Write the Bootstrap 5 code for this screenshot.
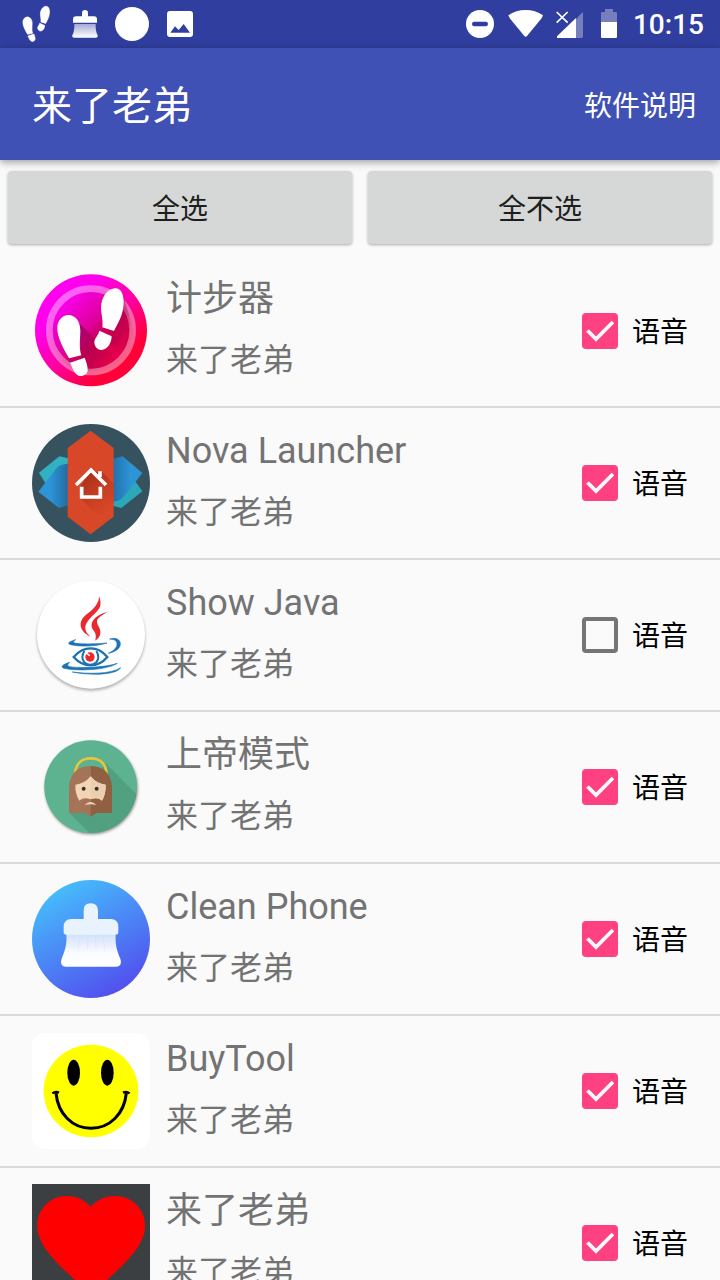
<!DOCTYPE html>
<html lang="zh-CN">
<head>
<meta charset="utf-8">
<meta name="viewport" content="width=device-width, initial-scale=1">
<title>来了老弟</title>
<link rel="stylesheet" href="https://cdn.jsdelivr.net/npm/bootstrap@5.3.0/dist/css/bootstrap.min.css">
<style>
  body { font-family: Roboto, "Noto Sans CJK SC", sans-serif; background: #fafafa; color: #000; }
  .status-bar { background: #303f9f; height: 48px; padding: 0 16px 0 12px; color: #fff; }
  .status-bar svg { height: 48px; }
  .clock { font-size: 28px; line-height: 48px; font-weight: 500; margin-left: 5px; padding-top: 2px; }
  .app-bar { background: #3f51b5; height: 112px; padding: 6px 24px 0 32px; box-shadow: 0 2px 8px rgba(0,0,0,.4); z-index: 2; }
  .app-title { font-size: 40px; line-height: 48px; font-weight: 400; color: #fff; }
  .app-link { font-size: 28px; line-height: 40px; }
  .actions { padding: 11px 8px 12px; gap: 16px; }
  .btn-pick, .btn-pick:hover { background: #d6d8d7; color: #1d1e1e; border: 0; border-radius: 4px; height: 73px; padding: 8px 12px 4px; font-size: 28px; line-height: 40px; box-shadow: 0 1px 3px rgba(0,0,0,.32); }
  .app-list { scrollbar-width: none; }
  .app-list::-webkit-scrollbar { display: none; }
  .app-row { padding: 16px 32px; gap: 16px; border-bottom: 2px solid #dadada; }
  .app-icon { width: 118px; height: 118px; }
  .app-name { font-size: 36px; line-height: 54px; font-weight: 400; color: #737373; margin-bottom: 4px; }
  .app-alias { font-size: 32px; line-height: 60px; color: #737373; }
  .voice { gap: 14px; font-size: 28px; line-height: 40px; }
  .voice label { padding-top: 4px; }
  .voice .form-check-input { width: 36px; height: 36px; margin: 0; border: 4px solid #757575; border-radius: 4px; background-color: transparent; }
  .voice .form-check-input:checked { border-color: #ff4081; background-color: #ff4081; background-origin: border-box; background-size: 36px 36px;
    background-image: url("data:image/svg+xml,%3Csvg xmlns='http://www.w3.org/2000/svg' viewBox='0 0 36 36'%3E%3Cpath d='M5.5 17.5 14 26 31 9' fill='none' stroke='%23fafafa' stroke-width='3.8'/%3E%3C/svg%3E"); }
</style>
</head>
<body class="vh-100 d-flex flex-column overflow-hidden">
<svg width="0" height="0" class="position-absolute" aria-hidden="true">
  <defs>
    <g id="feet">
      <path d="M145 165C127 165 112 182 112 204C112 232 127 260 147 295L184 286C176 262 181 235 181 212C181 184 166 165 145 165Z"/>
      <path d="M150 308 194 293C199 306 204 321 203 332C201 343 191 348 181 348C165 346 161 331 150 308Z"/>
      <path d="M286 85C263 85 243 112 243 144C244 166 250 182 247 202L282 213C295 188 311 163 311 127C311 102 303 85 286 85Z"/>
      <path d="M238 212 275 229C275 246 264 270 244 270C231 269 223 259 223 246C224 234 235 226 238 212Z"/>
    </g>
  </defs>
</svg>

<div class="status-bar d-flex align-items-center flex-shrink-0">
  <svg width="48" viewBox="36 0 144 144" fill="#fff" aria-hidden="true"><use href="#feet" transform="translate(24 -15) scale(.4)" stroke="#fff" stroke-width="5"/></svg>
  <svg width="48" viewBox="180 0 144 144" aria-hidden="true">
    <defs><linearGradient id="bristle" x1="0" y1="0" x2="0" y2="1"><stop stop-color="#a4aad5"/><stop offset="1" stop-color="#fff"/></linearGradient></defs>
    <path d="M219 68V58Q219 49 228 49H246V39Q246 30 255 30Q264 30 264 39V49H282Q291 49 291 58V68Z" fill="#fff"/>
    <path d="M223 72H287Q286 94 293 106Q294 113 287 113H223Q215 113 217 106Q224 94 223 72Z" fill="url(#bristle)"/>
  </svg>
  <svg width="48" viewBox="324 0 144 144" aria-hidden="true"><circle cx="396" cy="72" r="51" fill="#fff"/></svg>
  <svg width="48" viewBox="468 0 144 144" aria-hidden="true"><path fill="#fff" fill-rule="evenodd" d="M510 33H570Q579 33 579 42V102Q579 111 570 111H510Q501 111 501 102V42Q501 33 510 33ZM511 98H570L551 72 536 90 525 79Z"/></svg>
  <div class="ms-auto d-flex align-items-center">
    <svg width="48" viewBox="48 0 144 144" aria-hidden="true"><circle cx="120" cy="72" r="42" fill="#fff"/><path d="M103 72H137" stroke="#303f9f" stroke-width="14" stroke-linecap="round"/></svg>
    <svg width="42" viewBox="192 0 126 144" aria-hidden="true"><path d="M205 46Q228 30 257 30T309 46Q307 52 303 57L261 108Q257 113 253 108L211 57Q207 52 205 46Z" fill="#fff"/></svg>
    <svg width="42" viewBox="318 0 126 144" aria-hidden="true"><path d="M408 57 426 38Q429 35 429 40V109Q429 114 424 114H408Z" fill="#757fbe"/><path d="M408 54V114H351V109Z" fill="#fff"/><path d="M350 36 383 68M383 36 350 68" stroke="#fff" stroke-width="5"/></svg>
    <svg width="40" viewBox="444 0 120 144" aria-hidden="true"><path d="M483 66V40Q483 36 487 36H495V27H519V36H527Q531 36 531 40V66Z" fill="#757fbe"/><path d="M483 66H531V110Q531 114 527 114H487Q483 114 483 110Z" fill="#fff"/></svg>
    <span class="clock">10:15</span>
  </div>
</div>

<nav class="app-bar d-flex align-items-center justify-content-between flex-shrink-0 position-relative">
  <h1 class="app-title mb-0">来了老弟</h1>
  <a class="app-link text-white text-decoration-none" href="#about">软件说明</a>
</nav>

<div class="actions d-flex flex-shrink-0">
  <button type="button" class="btn btn-pick flex-fill w-50">全选</button>
  <button type="button" class="btn btn-pick flex-fill w-50">全不选</button>
</div>

<ul class="app-list list-unstyled mb-0 flex-grow-1 overflow-auto">
  <li class="app-row d-flex align-items-center">
    <svg class="app-icon flex-shrink-0" viewBox="36 36 354 354" aria-hidden="true">
      <defs>
        <linearGradient id="pink" x1=".15" y1=".1" x2=".85" y2=".9"><stop offset=".2" stop-color="#f0e"/><stop offset=".5" stop-color="#f0a"/><stop offset=".85" stop-color="#ff0038"/></linearGradient>
        <linearGradient id="pinkin" x1=".1" y1=".1" x2=".9" y2=".9"><stop stop-color="#f0f"/><stop offset=".45" stop-color="#e0009c"/><stop offset=".62" stop-color="#c80056"/><stop offset="1" stop-color="#f00044"/></linearGradient>
        <linearGradient id="footshade" x1="0" y1="0" x2="1" y2="1"><stop stop-color="#8a0050" stop-opacity=".75"/><stop offset="1" stop-color="#c00040" stop-opacity="0"/></linearGradient>
      </defs>
      <circle cx="213" cy="211" r="168" fill="url(#pink)"/>
      <circle cx="213" cy="211" r="125" fill="url(#pinkin)" stroke="#fff" stroke-opacity=".38" stroke-width="20"/>
      <path d="M178 190 280 292Q245 328 201 330L184 286Z" fill="url(#footshade)"/>
      <path d="M308 105 328 165Q338 225 315 270L265 250 282 213Z" fill="url(#footshade)"/>
      <use href="#feet" fill="#fff"/>
    </svg>
    <div class="flex-grow-1">
      <h2 class="app-name">计步器</h2>
      <div class="app-alias">来了老弟</div>
    </div>
    <div class="voice d-flex align-items-center"><input class="form-check-input" type="checkbox" id="v1" checked><label for="v1">语音</label></div>
  </li>
  <li class="app-row d-flex align-items-center">
    <svg class="app-icon flex-shrink-0" viewBox="36 27 354 354" aria-hidden="true">
      <defs>
        <linearGradient id="wingl"><stop offset=".4" stop-color="#2d94d6"/><stop offset="1" stop-color="#226a9f"/></linearGradient>
        <linearGradient id="wingr"><stop stop-color="#226fa8"/><stop offset=".6" stop-color="#2d94d6"/></linearGradient>
        <linearGradient id="houseshade" x1=".2" y1="0" x2=".8" y2="1"><stop stop-color="#a32d18"/><stop offset="1" stop-color="#d84727" stop-opacity=".4"/></linearGradient>
      </defs>
      <circle cx="213" cy="204" r="177" fill="#37525f"/>
      <path d="M57 173 118 124 146 130V190L80 210Z" fill="#30b2c2"/>
      <path d="M55 230 112 156Q118 148 146 146V271L117 279Z" fill="url(#wingl)"/>
      <path d="M367 229 304 279 278 272V210L343 195Z" fill="#2ca9b9"/>
      <path d="M367 174 314 242Q302 258 278 260V131L308 124Z" fill="url(#wingr)"/>
      <path d="M212 47 281 99V305L212 358 143 305V99Z" fill="#d84727"/>
      <path d="M247 172 281 206V268L252 300 232 300 180 249V215L213 170Z" fill="url(#houseshade)"/>
      <path d="M168 210 213 165 258 210M240 186V169M185 215V246H241V215" fill="none" stroke="#fff" stroke-width="11"/>
    </svg>
    <div class="flex-grow-1">
      <h2 class="app-name">Nova Launcher</h2>
      <div class="app-alias">来了老弟</div>
    </div>
    <div class="voice d-flex align-items-center"><input class="form-check-input" type="checkbox" id="v2" checked><label for="v2">语音</label></div>
  </li>
  <li class="app-row d-flex align-items-center">
    <svg class="app-icon flex-shrink-0 overflow-visible" viewBox="36 33 354 354" aria-hidden="true">
      <defs><filter id="soft" x="-20%" y="-20%" width="140%" height="140%"><feGaussianBlur stdDeviation="4"/></filter></defs>
      <circle cx="213" cy="215" r="162" opacity=".3" filter="url(#soft)"/>
      <circle cx="213" cy="209" r="162" fill="#fff"/>
      <g fill="#e9282f">
        <path d="M237 93C244 113 244 125 231 139C211 159 193 176 196 192C198 204 207 210 211 215C193 206 180 193 182 175C185 151 212 144 227 122C235 111 237 103 237 93Z"/>
        <path d="M264 140C243 151 230 160 231 171C232 183 243 190 241 205C240 216 233 222 226 227C229 212 227 202 220 195C211 184 214 169 226 158C237 149 249 143 264 140Z"/>
        <circle cx="210" cy="276" r="14"/>
      </g>
      <g fill="#1a72b5" stroke="#1a72b5" stroke-width="2">
        <path d="M167 224C147 230 140 235 152 239C184 246 230 244 261 234C230 237 190 238 168 235C157 233 160 228 167 224Z"/>
        <path d="M269 222C287 217 301 222 301 237C300 252 285 261 265 265C282 257 291 248 291 237C291 227 283 223 269 222Z"/>
        <path d="M149 292C127 299 120 306 132 310C170 319 260 316 292 295C262 306 190 311 149 305C140 302 143 297 149 292Z"/>
        <path d="M157 321C203 327 274 328 302 308C291 327 227 334 157 321Z"/>
      </g>
      <path d="M161 276Q183 250 212 250T262 276Q241 301 212 301T161 276Z" fill="none" stroke="#1a72b5" stroke-width="7"/>
      <path d="M193 258Q181 278 193 292Q211 307 229 292Q241 277 229 258" fill="none" stroke="#1a72b5" stroke-width="6"/>
      <path d="M197 263 209 272" stroke="#fff" stroke-width="5"/>
    </svg>
    <div class="flex-grow-1">
      <h2 class="app-name">Show Java</h2>
      <div class="app-alias">来了老弟</div>
    </div>
    <div class="voice d-flex align-items-center"><input class="form-check-input" type="checkbox" id="v3"><label for="v3">语音</label></div>
  </li>
  <li class="app-row d-flex align-items-center">
    <svg class="app-icon flex-shrink-0" viewBox="36 9 354 354" aria-hidden="true">
      <defs><clipPath id="disc"><circle cx="212" cy="185" r="139"/></clipPath></defs>
      <circle cx="214" cy="189" r="139" opacity=".45" filter="url(#soft)"/>
      <circle cx="212" cy="185" r="139" fill="#5db290"/>
      <path d="M257 115 360 218V340H224L147 263Z" fill="#51a181" clip-path="url(#disc)"/>
      <path d="M165 150C166 117 184 100 212 100S259 117 260 150" fill="none" stroke="#eac53c" stroke-width="8"/>
      <path d="M147 264V185C150 148 170 123 212 123V275L195 264Z" fill="#a57356"/>
      <path d="M276 264V185C273 148 253 123 212 123V275L229 264Z" fill="#915f42"/>
      <path d="M166 179Q194 176 212 154Q229 176 257 179Q258 207 246 227Q233 215 212 223Q191 215 178 227Q165 207 166 179Z" fill="#f2d5b6"/>
      <path d="M212 154Q229 176 257 179Q258 207 246 227Q233 215 212 223Z" fill="#eccfae"/>
      <circle cx="191" cy="191" r="6" fill="#3b332f"/><circle cx="230" cy="191" r="6" fill="#3b332f"/>
      <path d="M194 240Q212 222 229 240Q212 236 194 240Z" fill="#f2d5b6"/>
    </svg>
    <div class="flex-grow-1">
      <h2 class="app-name">上帝模式</h2>
      <div class="app-alias">来了老弟</div>
    </div>
    <div class="voice d-flex align-items-center"><input class="form-check-input" type="checkbox" id="v4" checked><label for="v4">语音</label></div>
  </li>
  <li class="app-row d-flex align-items-center">
    <svg class="app-icon flex-shrink-0" viewBox="36 30 354 354" aria-hidden="true">
      <defs>
        <linearGradient id="sky" x1=".25" y1=".05" x2=".75" y2=".95"><stop stop-color="#46bcfb"/><stop offset=".5" stop-color="#4b85f6"/><stop offset="1" stop-color="#524fee"/></linearGradient>
        <linearGradient id="brush" x1="0" y1="0" x2="0" y2="1"><stop stop-color="#d0e0fa"/><stop offset=".6" stop-color="#fbfcff"/><stop offset="1" stop-color="#fff"/></linearGradient>
      </defs>
      <circle cx="213" cy="207" r="177" fill="url(#sky)"/>
      <path d="M139 190H287C286 220 288 238 301 266C306 281 300 290 288 290H138C126 290 120 281 125 266C137 238 141 220 139 190Z" fill="url(#brush)"/>
      <path d="M181 195 174 245M204 195 202 240M226 195 228 240M249 195 255 245" stroke="#c9dafa" stroke-width="3" opacity=".35"/>
      <path d="M131 186V171Q131 147 155 147H191V121Q191 100 212 100T234 121V147H272Q295 147 295 171V186Q295 194 287 194H139Q131 194 131 186Z" fill="#e9f3fe"/>
    </svg>
    <div class="flex-grow-1">
      <h2 class="app-name">Clean Phone</h2>
      <div class="app-alias">来了老弟</div>
    </div>
    <div class="voice d-flex align-items-center"><input class="form-check-input" type="checkbox" id="v5" checked><label for="v5">语音</label></div>
  </li>
  <li class="app-row d-flex align-items-center">
    <svg class="app-icon flex-shrink-0" viewBox="36 36 354 354" aria-hidden="true">
      <rect x="36" y="39" width="354" height="348" rx="38" fill="#fff"/>
      <ellipse cx="213" cy="213" rx="142" ry="139" fill="#ff0"/>
      <ellipse cx="161" cy="158" rx="19" ry="39"/><ellipse cx="262" cy="158" rx="19" ry="39"/>
      <path d="M108 219C114 282 157 325 213 325S313 282 319 219" fill="none" stroke="#000" stroke-width="9"/>
      <path d="M97 220Q107 213 117 218M309 218Q319 213 329 220" fill="none" stroke="#000" stroke-width="7"/>
    </svg>
    <div class="flex-grow-1">
      <h2 class="app-name">BuyTool</h2>
      <div class="app-alias">来了老弟</div>
    </div>
    <div class="voice d-flex align-items-center"><input class="form-check-input" type="checkbox" id="v6" checked><label for="v6">语音</label></div>
  </li>
  <li class="app-row d-flex align-items-center">
    <svg class="app-icon flex-shrink-0" viewBox="36 57 354 354" aria-hidden="true">
      <path d="M36 57H390V411H36Z" fill="#3c3f41"/>
      <path d="M212 126C193 103 168 93 141 93C90 93 52 132 52 182C52 242 112 295 169 349L213 389 257 349C315 295 375 242 375 182C375 132 336 93 285 93C257 93 232 103 212 126Z" fill="red"/>
    </svg>
    <div class="flex-grow-1">
      <h2 class="app-name">来了老弟</h2>
      <div class="app-alias">来了老弟</div>
    </div>
    <div class="voice d-flex align-items-center"><input class="form-check-input" type="checkbox" id="v7" checked><label for="v7">语音</label></div>
  </li>
</ul>
<script src="https://cdn.jsdelivr.net/npm/bootstrap@5.3.0/dist/js/bootstrap.bundle.min.js"></script>
</body>
</html>
